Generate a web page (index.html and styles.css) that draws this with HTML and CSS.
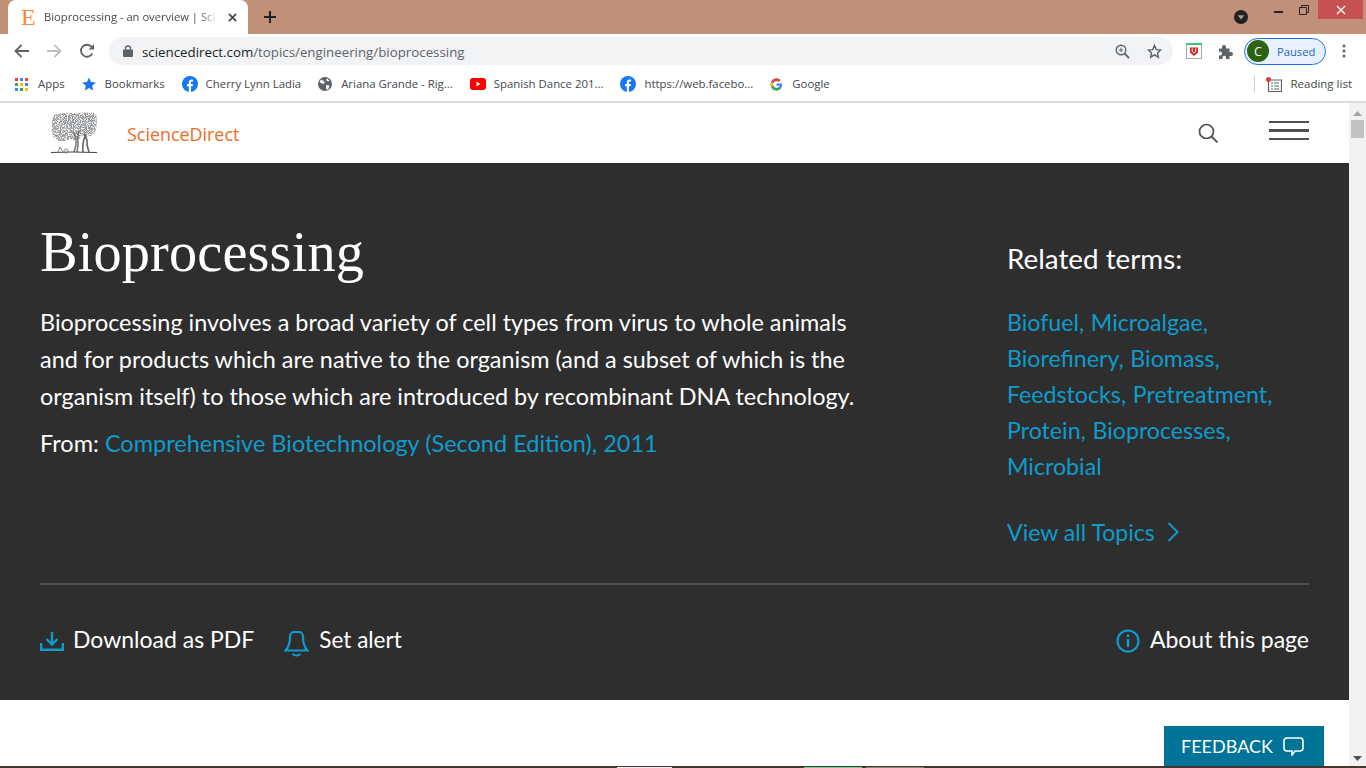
FILE: index.html
```html
<!DOCTYPE html>
<html lang="en">
<head>
    <meta charset="UTF-8">
    <meta name="viewport" content="width=device-width, initial-scale=1.0">
    <title>Bioprocessing - an overview | ScienceDirect Topics</title>
    <link rel="stylesheet" href="styles.css">
</head>
<body>
    <div class="tabstrip">
        <div class="tab">
            <span class="tab-favicon">E</span>
            <span class="tab-title">Bioprocessing - an overview | Sci</span>
            <svg class="tab-close" width="9" height="9" viewBox="0 0 10 10"><path d="M1 1l8 8M9 1l-8 8" stroke="#45484c" stroke-width="1.9"/></svg>
        </div>
        <svg class="new-tab" width="12" height="12" viewBox="0 0 12 12"><path d="M6 0v12M0 6h12" stroke="#202124" stroke-width="2"/></svg>
        <div class="window-controls">
            <svg class="media-dot" width="14" height="14" viewBox="0 0 14 14"><circle cx="7" cy="7" r="7" fill="#202124"/><path d="M3.6 5.2h6.8L7 9.6z" fill="#c09079"/></svg>
            <svg class="win-min" width="9" height="2" viewBox="0 0 9 2"><rect width="9" height="2" fill="#26262a"/></svg>
            <svg class="win-max" width="10" height="10" viewBox="0 0 10 10"><path d="M.5 2.5h7v7h-7zM2.5 2.5v-2h7v7h-2" fill="none" stroke="#26262a"/></svg>
            <div class="win-close"><svg width="10" height="10" viewBox="0 0 10 10"><path d="M1 1l8 8M9 1l-8 8" stroke="#fff" stroke-width="1.4"/></svg></div>
        </div>
    </div>

    <div class="toolbar">
        <svg width="16" height="14" viewBox="0 0 16 14"><path d="M15 7H2M7.5 1L1.5 7l6 6" fill="none" stroke="#5f6368" stroke-width="1.8"/></svg>
        <svg class="nav-forward" width="16" height="14" viewBox="0 0 16 14"><path d="M1 7h13M8.500 1l6 6-6 6" fill="none" stroke="#bdc1c6" stroke-width="1.8"/></svg>
        <svg class="nav-reload" width="16" height="16" viewBox="0 0 16 16"><path d="M13.300 10.500A6 6 0 1 1 12.600 3.900" fill="none" stroke="#5f6368" stroke-width="1.8"/><path d="M9.500 6.500h5.500V1z" fill="#5f6368"/></svg>
        <div class="omnibox">
            <svg width="10" height="12" viewBox="0 0 10 12"><path d="M2.500 5V3.500a2.500 2.500 0 0 1 5 0V5" fill="none" stroke="#5f6368" stroke-width="1.300"/><rect y="4.500" width="10" height="7.500" rx="1" fill="#5f6368"/></svg>
            <span class="url"><span class="url-host">sciencedirect.com</span>/topics/engineering/bioprocessing</span>
            <svg class="omni-zoom" width="15" height="15" viewBox="0 0 15 15"><circle cx="6" cy="6" r="4.800" fill="none" stroke="#5f6368" stroke-width="1.400"/><path d="M9.500 9.500l4.500 4.500" stroke="#5f6368" stroke-width="1.800"/><path d="M6 3.700v4.600M3.700 6h4.600" stroke="#5f6368"/></svg>
            <svg class="omni-star" width="15" height="15" viewBox="0 0 15 15"><path d="M7.500 1.500l1.800 4.100 4.400.4-3.300 2.900 1 4.300-3.900-2.300-3.900 2.300 1-4.300L1.300 6l4.400-.4z" fill="none" stroke="#5f6368" stroke-width="1.400"/></svg>
        </div>
        <svg class="ext-pocket" width="16" height="16" viewBox="0 0 16 16"><rect x=".5" y=".5" width="15" height="15" fill="#fff" stroke="#aaa"/><rect width="16" height="2" fill="#2ecc71"/><path d="M4 4.500h8v5L8 13 4 9.500z" fill="#c62828"/><path d="M6.200 5.500v3l1.800 1.500 1.800-1.500v-3" fill="none" stroke="#fff"/></svg>
        <svg class="ext-puzzle" width="15" height="15" viewBox="0 0 15 15"><path d="M1 4.500h3V3a2 2 0 0 1 4 0v1.500h3.500V8H13a2 2 0 0 1 0 4h-1.500v3H8v-1.500a1.700 1.700 0 0 0-3.500 0V15H1v-3.500h1a2 2 0 0 0 0-4H1z" fill="#5f6368"/></svg>
        <div class="profile"><span class="avatar">C</span><span class="paused">Paused</span></div>
        <svg class="menu-dots" width="4" height="14" viewBox="0 0 4 14"><circle cx="2" cy="2" r="1.500" fill="#5f6368"/><circle cx="2" cy="7" r="1.500" fill="#5f6368"/><circle cx="2" cy="12" r="1.500" fill="#5f6368"/></svg>
    </div>

    <div class="bookmarks">
        <div class="bm bm-apps">
            <svg width="13" height="13" viewBox="0 0 13 13"><rect width="3" height="3" fill="#ea4335"/><rect x="5" width="3" height="3" fill="#4285f4"/><rect x="10" width="3" height="3" fill="#ea4335"/><rect y="5" width="3" height="3" fill="#34a853"/><rect x="5" y="5" width="3" height="3" fill="#fbbc05"/><rect x="10" y="5" width="3" height="3" fill="#4285f4"/><rect y="10" width="3" height="3" fill="#4285f4"/><rect x="5" y="10" width="3" height="3" fill="#34a853"/><rect x="10" y="10" width="3" height="3" fill="#fbbc05"/></svg>
            <span>Apps</span>
        </div>
        <div class="bm">
            <svg width="14" height="14" viewBox="0 0 14 14"><path d="M7 .5l2 4.500 4.800.5-3.600 3.200 1 4.800L7 11l-4.200 2.500 1-4.800L.2 5.500 5 5z" fill="#1a73e8"/></svg>
            <span>Bookmarks</span>
        </div>
        <div class="bm bm-wide">
            <svg width="16" height="16" viewBox="0 0 16 16"><circle cx="8" cy="8" r="8" fill="#1877f2"/><path d="M6.800 16V10.300H5V8h1.800V6.300c0-1.900 1.100-2.900 2.800-2.900l1.500.1v2h-1c-.9 0-1.200.5-1.200 1.100V8h2.100l-.4 2.300H9v5.700z" fill="#fff"/></svg>
            <span>Cherry Lynn Ladia</span>
        </div>
        <div class="bm">
            <svg width="14" height="14" viewBox="0 0 14 14"><circle cx="7" cy="7" r="7" fill="#5f6368"/><path d="M3 2.500l3 1.500 1 2-2.500 1-3-2zM8 8l3.500.5-1 3.500-2 1-.5-2.500zM9 1.500l2.500 2-1.500 1L8 3z" fill="#fff"/></svg>
            <span>Ariana Grande - Rig...</span>
        </div>
        <div class="bm bm-wide">
            <svg width="16" height="12" viewBox="0 0 16 12"><rect width="16" height="12" rx="3" fill="#f00"/><path d="M6.500 3.500v5L10.500 6z" fill="#fff"/></svg>
            <span>Spanish Dance 201...</span>
        </div>
        <div class="bm bm-wide">
            <svg width="16" height="16" viewBox="0 0 16 16"><circle cx="8" cy="8" r="8" fill="#1877f2"/><path d="M6.800 16V10.300H5V8h1.800V6.300c0-1.900 1.100-2.900 2.800-2.900l1.500.1v2h-1c-.9 0-1.200.5-1.200 1.100V8h2.100l-.4 2.300H9v5.700z" fill="#fff"/></svg>
            <span>https://web.facebo...</span>
        </div>
        <div class="bm">
            <svg width="13" height="13" viewBox="0 0 48 48"><path d="M44.500 20H24v8.500h11.800C34.700 33.900 30.100 37 24 37c-7.200 0-13-5.800-13-13s5.800-13 13-13c3.100 0 5.900 1.100 8.100 2.900l6.400-6.400C34.600 4.100 29.600 2 24 2 11.800 2 2 11.800 2 24s9.800 22 22 22c11 0 21-8 21-22 0-1.300-.2-2.700-.5-4z" fill="#4285f4"/><path d="M5.300 13.700l7 5.100C14.100 14.300 18.700 11 24 11c3.100 0 5.900 1.100 8.100 2.900l6.400-6.400C34.600 4.100 29.600 2 24 2 15.500 2 8.200 6.700 5.300 13.700z" fill="#ea4335"/><path d="M24 46c5.500 0 10.400-1.900 14.200-5.100l-6.600-5.500C29.500 36.900 26.900 37 24 37c-5.800 0-10.700-3.700-12.400-9l-7 5.300C7.900 40.300 15.300 46 24 46z" fill="#34a853"/><path d="M5.300 13.700C3.200 17 2 20.400 2 24s1 7 2.600 9.300l7-5.300c-.4-1.300-.6-2.600-.6-4s.5-3.900 1.300-5.200z" fill="#fbbc05"/></svg>
            <span>Google</span>
        </div>
        <div class="reading-list">
            <svg width="16" height="15" viewBox="0 0 16 15"><path d="M2.500 3h13v11.500h-13z" fill="none" stroke="#5f6368" stroke-width="1.200"/><path d="M5 6h2M8 6h5M5 9h2M8 9h5M5 12h2M8 12h5" stroke="#5f6368" stroke-width="1.200"/><circle cx="2.500" cy="2.500" r="2.500" fill="#e53935"/></svg>
            <span>Reading list</span>
        </div>
    </div>

    <div class="viewport">
        <div class="page">
            <header class="site-header">
                <div class="brand">
                    <svg class="tree" width="46" height="42" viewBox="0 0 46 42">
                        <defs>
                            <filter id="stipple" x="0" y="0" width="100%" height="100%">
                                <feTurbulence type="fractalNoise" baseFrequency="0.85" numOctaves="2" seed="7" result="noise"/>
                                <feColorMatrix in="noise" type="matrix" values="0 0 0 0 .3  0 0 0 0 .31  0 0 0 0 .32  3.500 3.500 0 0 -2.800" result="speck"/>
                                <feComposite in="speck" in2="SourceGraphic" operator="in"/>
                            </filter>
                        </defs>
                        <path filter="url(#stipple)" d="M3 3Q12 0 22 1Q36 0 45 1Q47 12 44 21Q38 27 31 23Q28 30 20 27Q10 32 4 26Q0 24 1 14Q0 8 3 3z" fill="#000"/>
                        <path d="M22 20Q26 26 25 33L23 40M28 18Q26 26 27 33L26 40" fill="none" stroke="#777" stroke-width="1.500"/>
                        <path d="M33 22Q37 28 36 33L38 40M34 24Q31 32 32 40" fill="none" stroke="#666" stroke-width="1.600"/>
                        <path d="M0 40.500Q20 39.500 46 40.500" stroke="#444" stroke-width="1.200" fill="none"/>
                        <path d="M7 40l2-5 3 5M15 37a2 2 0 1 0 .1 0" fill="none" stroke="#777" stroke-width=".9"/>
                    </svg>
                    <a class="brand-name" href="#">ScienceDirect</a>
                </div>
                <div class="header-actions">
                    <svg width="20" height="20" viewBox="0 0 20 20"><circle cx="8.500" cy="8.500" r="7" fill="none" stroke="#505050" stroke-width="1.700"/><path d="M13.500 13.500l6 6" stroke="#505050" stroke-width="1.800"/></svg>
                    <div class="hamburger"><i></i><i></i><i></i></div>
                </div>
            </header>

            <section class="hero">
                <div class="hero-top">
                    <div class="hero-main">
                        <h1>Bioprocessing</h1>
                        <p class="summary">Bioprocessing involves a broad variety of cell types from virus to whole animals and for products which are native to the organism (and a subset of which is the organism itself) to those which are introduced by recombinant DNA technology.</p>
                        <p class="source">From: <a href="#">Comprehensive Biotechnology (Second Edition), 2011</a></p>
                    </div>
                    <aside class="related">
                        <h2>Related terms:</h2>
                        <ul>
                            <li><a href="#">Biofuel,</a> <a href="#">Microalgae,</a></li>
                            <li><a href="#">Biorefinery,</a> <a href="#">Biomass,</a></li>
                            <li><a href="#">Feedstocks,</a> <a href="#">Pretreatment,</a></li>
                            <li><a href="#">Protein,</a> <a href="#">Bioprocesses,</a></li>
                            <li><a href="#">Microbial</a></li>
                        </ul>
                        <a class="view-all" href="#">View all Topics
                            <svg width="12" height="20" viewBox="0 0 12 20"><path d="M1.500 1l9 9-9 9" fill="none" stroke="#0d9ccd" stroke-width="2"/></svg>
                        </a>
                    </aside>
                </div>
                <div class="hero-actions">
                    <a class="action" href="#">
                        <svg class="download-icon" width="24" height="20" viewBox="0 0 24 20"><path d="M1.200 12v6.800h21.600V12" fill="none" stroke="#0d9ccd" stroke-width="2.400"/><path d="M12 1v12M6.500 8l5.500 5.500L17.500 8" fill="none" stroke="#0d9ccd" stroke-width="2.400"/></svg>
                        Download as PDF
                    </a>
                    <a class="action action-alert" href="#">
                        <svg class="bell-icon" width="25" height="26" viewBox="0 0 25 26"><path d="M1.500 19.500C5 16 6 11 6 6c0-3 2-5 4-5h5c2 0 4 2 4 5 0 5 1 10 4.500 13.500z" fill="none" stroke="#0d9ccd" stroke-width="2.200"/><path d="M8.500 23c2.300 2 5.700 2 8 0" fill="none" stroke="#0d9ccd" stroke-width="2.200"/></svg>
                        Set alert
                    </a>
                    <a class="action action-about" href="#">
                        <svg class="info-icon" width="24" height="24" viewBox="0 0 24 24"><circle cx="12" cy="12" r="10.500" fill="none" stroke="#0d9ccd" stroke-width="2.200"/><path d="M12 10v8" stroke="#0d9ccd" stroke-width="2.400"/><circle cx="12" cy="6.800" r="1.500" fill="#0d9ccd"/></svg>
                        About this page
                    </a>
                </div>
            </section>
            <button class="feedback">FEEDBACK
                <svg width="21" height="19" viewBox="0 0 21 19"><path d="M4 1h13a3 3 0 0 1 3 3v7a3 3 0 0 1-3 3h-5l-3 4v-4H4a3 3 0 0 1-3-3V4a3 3 0 0 1 3-3z" fill="none" stroke="#fff" stroke-width="1.600"/></svg>
            </button>
        </div>
        <div class="scrollbar">
            <svg width="9" height="5" viewBox="0 0 9 5"><path d="M0 5h9L4.500 0z" fill="#a3a3a3"/></svg>
            <div class="scroll-thumb"></div>
            <svg class="scroll-down" width="9" height="5" viewBox="0 0 9 5"><path d="M0 0h9L4.500 5z" fill="#505050"/></svg>
        </div>
    </div>

    <div class="taskbar-edge">
        <i class="edge-white"></i>
        <i class="edge-green"></i>
        <i class="edge-grey"></i>
    </div>
</body>
</html>
```

FILE: styles.css
```css
* { box-sizing: border-box; }
html, body { margin: 0; padding: 0; }
body { width: 1366px; height: 768px; overflow: hidden; display: flex; flex-direction: column; font-family: "Open Sans", sans-serif; background: #fff; }
a { text-decoration: none; color: inherit; }

/* browser chrome */
.tabstrip { height: 34px; background: #c09079; display: flex; align-items: flex-start; flex-shrink: 0; }
.tab { width: 240px; height: 34px; margin-left: 8px; background: #fff; border-radius: 8px 8px 0 0; display: flex; align-items: center; padding: 0 7px 0 13px; }
.tab-favicon { width: 23px; font: 24px "Liberation Serif", serif; color: #f58a3c; flex-shrink: 0; }
.tab-title { width: 175px; margin-top: -1px; font-size: 11.200px; color: #45484c; white-space: nowrap; -webkit-mask-image: linear-gradient(to right, #000 88%, transparent); mask-image: linear-gradient(to right, #000 88%, transparent); }
.tab-close { margin-left: 9px; flex-shrink: 0; }
.new-tab { margin: 11px 0 0 16px; }
.window-controls { margin-left: auto; display: flex; align-items: flex-start; }
.media-dot { margin: 10px 0 0 0; }
.win-min { margin: 11px 0 0 26px; }
.win-max { margin: 5px 0 0 16px; }
.win-close { width: 45px; height: 19px; margin: 0 3px 0 9px; background: #c75050; display: flex; align-items: center; justify-content: center; }

.toolbar { height: 34px; display: flex; align-items: center; padding: 0 0 0 14px; flex-shrink: 0; }
.nav-forward { margin-left: 16px; }
.nav-reload { margin-left: 17px; }
.omnibox { width: 1064px; height: 28px; margin-left: 14px; background: #f1f3f4; border-radius: 14px; display: flex; align-items: center; padding: 0 11px 0 14px; }
.url { margin: 1px 0 0 9px; font-size: 13.300px; color: #5f6368; }
.url-host { color: #202124; }
.omni-zoom { margin-left: auto; }
.omni-star { margin-left: 17px; }
.ext-pocket { margin-left: 13px; }
.ext-puzzle { margin-left: 16px; }
.profile { width: 82px; height: 27px; margin-left: 11px; border: 1px solid #1a73e8; border-radius: 14px; background: #e8f0fe; display: flex; align-items: center; padding-left: 2px; }
.avatar { width: 22px; height: 22px; border-radius: 50%; background: #2d6414; color: #fff; font-size: 12.500px; display: flex; align-items: center; justify-content: center; }
.paused { margin-left: 8px; font-size: 11.200px; color: #1a66c9; }
.menu-dots { margin-left: 16px; }

.bookmarks { height: 35px; display: flex; align-items: center; padding: 0 14px 1px 15px; border-bottom: 2px solid #dadce0; flex-shrink: 0; }
.bm { display: flex; align-items: center; gap: 9px; font-size: 11.400px; color: #45484c; white-space: nowrap; margin-right: 17px; }
.bm span, .reading-list span { margin-top: -1px; }
.bm-apps { gap: 10px; }
.bm-wide { gap: 8px; }
.reading-list { margin-left: auto; display: flex; align-items: center; gap: 8px; padding-left: 11px; border-left: 1px solid #ccc; height: 18px; font-size: 11.500px; color: #45484c; }

/* page */
.viewport { flex: 1; display: flex; min-height: 0; }
.page { width: 1349px; position: relative; overflow: hidden; }
.site-header { height: 60px; display: flex; align-items: center; justify-content: space-between; padding: 0 40px 0 51px; background: #fff; }
.brand { display: flex; align-items: center; }
.brand-name { margin: 2px 0 0 30px; font-size: 17.900px; color: #ee6c23; }
.header-actions { display: flex; align-items: center; gap: 51px; margin-top: -1px; }
.hamburger { width: 40px; margin-top: -4px; display: flex; flex-direction: column; gap: 6px; }
.hamburger i { display: block; height: 2.500px; background: #505050; }

.hero { height: 537px; background: #2e2e2e; padding: 0 40px; color: #fff; font-family: Lato, sans-serif; }
.hero-top { height: 422px; display: flex; justify-content: space-between; border-bottom: 2px solid #505050; }
.hero-main { width: 830px; padding-top: 56px; }
h1 { margin: 0; font: 400 56.300px/66px "Liberation Serif", serif; letter-spacing: .15px; }
.summary { margin: 19px 0 0; font-size: 23.400px; line-height: 37px; }
.source { margin: 10px 0 0; font-size: 23.500px; line-height: 37px; }
.source a, .related a { color: #0d9ccd; }
.related { width: 302px; padding-top: 76px; }
h2 { margin: 0; font-size: 27.800px; font-weight: 400; line-height: 40px; }
.related ul { margin: 25px 0 0; padding: 0; list-style: none; font-size: 23.200px; line-height: 36px; word-spacing: .6px; }
.view-all { display: flex; align-items: center; gap: 12px; margin-top: 30px; font-size: 23.100px; line-height: 36px; }
.hero-actions { display: flex; align-items: center; height: 108px; font-size: 23px; }
.action { display: flex; align-items: center; gap: 9px; }
.action-alert { margin-left: 30px; gap: 10px; font-size: 22.500px; }
.action-about { margin-left: auto; gap: 10px; }
.download-icon { margin-top: 4px; }
.bell-icon { margin-top: 10px; }
.info-icon { margin-top: 3px; }
.feedback { position: absolute; left: 1164px; bottom: 0; width: 160px; height: 40px; padding: 0 3px 0 0; display: flex; align-items: center; justify-content: center; gap: 10px; border: 0; background: #007398; color: #fff; font: 18px Lato, sans-serif; }

.scrollbar { width: 17px; background: #f1f1f1; display: flex; flex-direction: column; align-items: center; padding: 8px 0 5px; }
.scroll-thumb { width: 13px; height: 18px; margin-top: 4px; background: #c1c1c1; }
.scroll-down { margin-top: auto; }

.taskbar-edge { height: 2px; background: #46362f; position: relative; flex-shrink: 0; }
.taskbar-edge i { position: absolute; top: 1px; height: 1px; }
.edge-white { left: 617px; width: 55px; background: #eee; }
.edge-green { left: 804px; width: 58px; background: #6fd38c; }
.edge-grey { left: 866px; width: 58px; background: #8b8280; }
```
